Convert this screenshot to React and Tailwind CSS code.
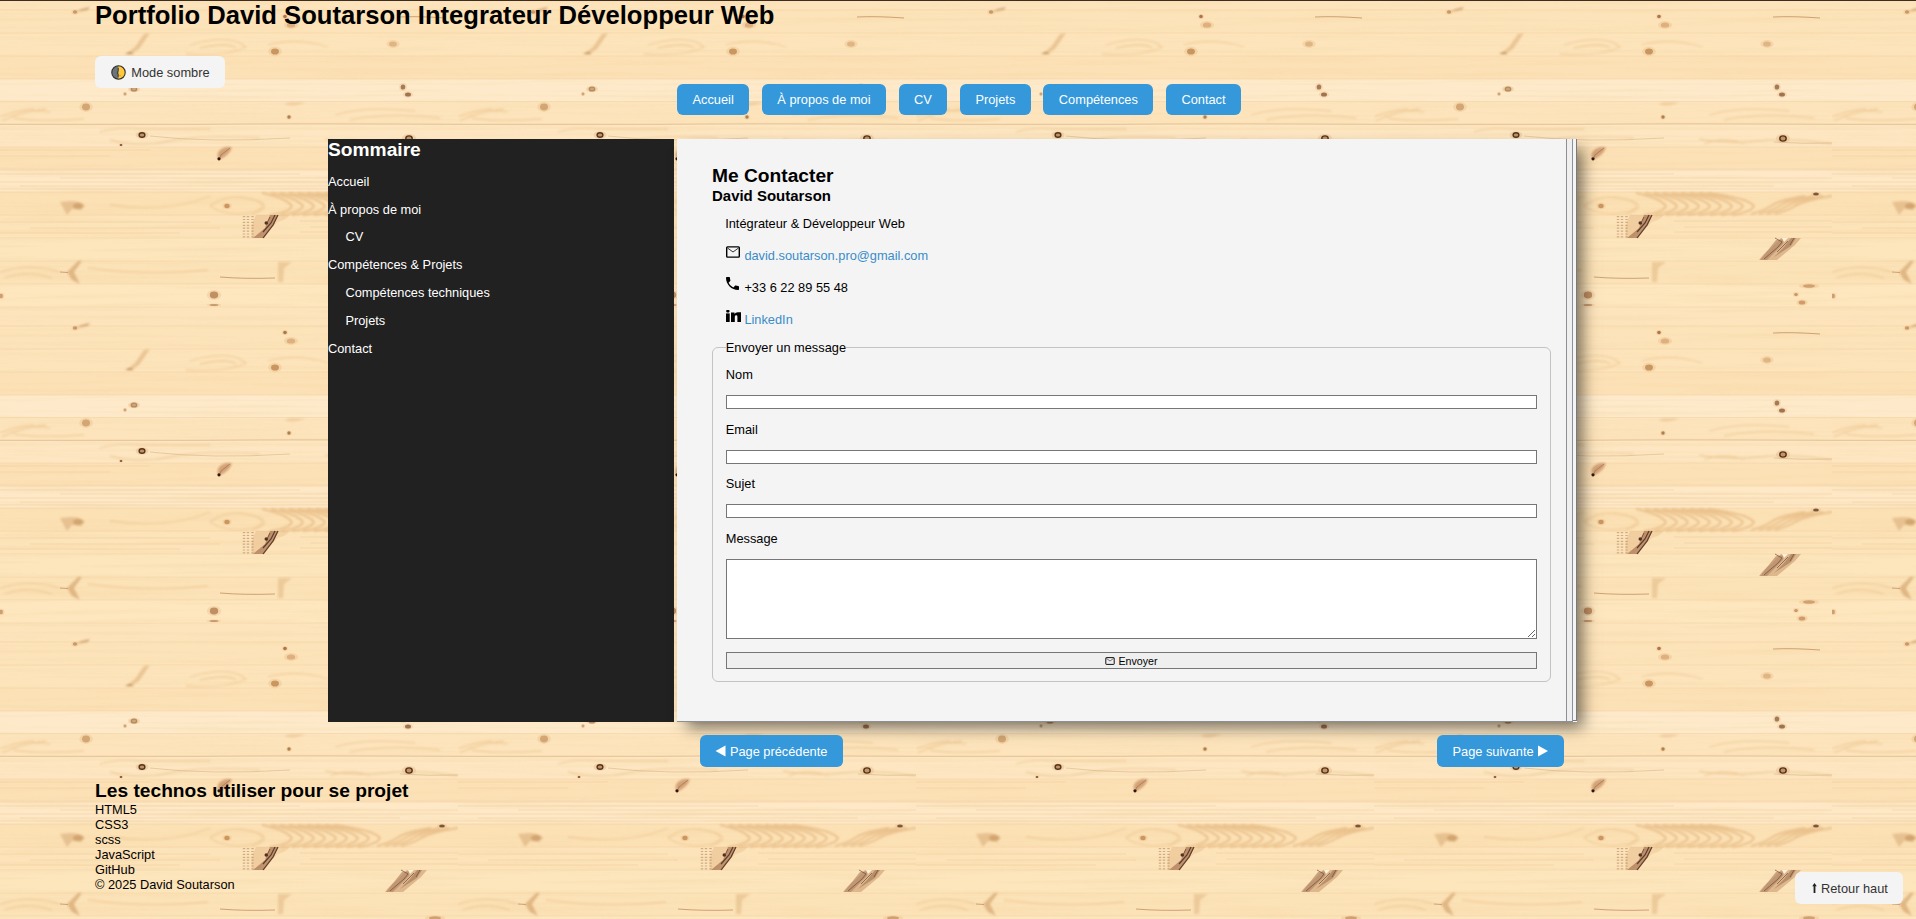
import React from "react";

const seams = [10, 33, 56, 79, 101.5, 124, 147, 169, 192, 215, 238, 261, 284, 307];
const tints = ["#fde3b9", "#fde4bb", "#fde1b6", "#feeaca", "#fde4bc", "#fde6c1", "#fde1b6", "#fee8c6", "#fce1b5", "#fde3b9", "#fde5bc", "#fce2b7", "#fee6be", "#fde4bc"];

const knots = [
  [75, 12, 2.1, 1.7, "#ab7045", 0.6],
  [285, 16.5, 1.8, 1.7, "#95552f", 0.75],
  [291, 25, 4.2, 2.6, "#c98c58", 0.5],
  [275, 51.5, 4, 3.1, "#b97d40", 0.7],
  [393, 44, 3.9, 2.6, "#c9955f", 0.5],
  [403, 87, 2.3, 2.6, "#85522f", 0.7],
  [408, 94.5, 3, 2.1, "#85522f", 0.75],
  [125, 94, 1.4, 1.4, "#b8804c", 0.6],
  [86, 107, 4, 3.4, "#bd8750", 0.6],
  [289, 117, 1.7, 1.7, "#9a6134", 0.75],
  [121, 145, 1.3, 1.1, "#603318", 0.8],
  [442, 194, 2.9, 1.5, "#56301c", 0.75],
  [227, 206, 2.7, 2.2, "#bd7d44", 0.7],
  [214, 295, 4.2, 3.4, "#a5683a", 0.65],
  [214, 305, 4.4, 1, "#a5683a", 0.55],
  [1, 296, 2, 2.2, "#a5683a", 0.5],
  [435, 286, 6, 1.7, "#bd8550", 0.65],
  [422, 294.5, 1.8, 1.6, "#a86c3c", 0.6],
  [428, 302.5, 3.3, 2.1, "#bd7d48", 0.65],
];

const rings = [
  [134, 89, 2.7, 1.9, "#9a6c3e", 0.7],
  [142, 135, 2.9, 2.2, "#4c2c18", 0.95],
  [409, 138.5, 3.2, 2.6, "#4c2c18", 0.95],
];

const chevrons = [0, 1, 2, 3, 4, 5, 6, 7, 8, 9, 10, 11, 12];

function Wood() {
  return (
    <svg className="absolute inset-0 h-full w-full" aria-hidden="true">
      <defs>
        <filter id="grain" x="0" y="0" width="100%" height="100%">
          <feTurbulence type="fractalNoise" baseFrequency="0.006 0.22" numOctaves="3" seed="8" stitchTiles="stitch" />
          <feColorMatrix values="0 0 0 0 0.9  0 0 0 0 0.68  0 0 0 0 0.38  2.2 0 0 0 -0.95" />
        </filter>
        <filter id="soft" x="-20%" y="-20%" width="140%" height="140%">
          <feGaussianBlur stdDeviation="0.7" />
        </filter>
        <filter id="softer" x="-20%" y="-20%" width="140%" height="140%">
          <feGaussianBlur stdDeviation="1.1" />
        </filter>
        <pattern id="wood" width="458" height="316" patternUnits="userSpaceOnUse">
          <rect width="458" height="316" fill="#fde4bc" />
          {seams.map((y, i) => (
            <g key={y}>
              <rect x="0" y={y} width="458" height="23" fill={tints[i]} />
              <rect x="0" y={y - 0.3} width="458" height="0.6" fill="#dcae72" opacity="0.35" />
            </g>
          ))}
          <rect width="458" height="316" filter="url(#grain)" opacity="0.42" />
          <g fill="none" stroke="#e6b97e" strokeWidth="1.3" opacity="0.5" filter="url(#softer)">
            <path d="M0 117q14-6 34-8M2 121q14-8 44-12M12 117q16-8 38-5M14 118q22 4 70 1" />
            <path d="M190 45q40-12 56 2q-20 10-60 7M200 48q28-6 36 0M268 45q28-8 60 2" />
            <path d="M335 115q30-9 80-4M350 120q40-8 90-2" />
            <path d="M100 132q15-5 40-3h70M110 140q30 8 60 1t90-3" />
            <path d="M325 139q30 6 60 2t73 3M330 144q20-8 40 0" />
            <path d="M0 272q30-9 60 0M4 278q25-8 48 0M88 268q60 8 120 2" />
            <path d="M210 206q18-14 44-6q16 6 0 12q-28 5-44-6M240 197q42 7 12 17" />
            <path d="M110 205q60 8 100-9" />
          </g>
          <g fill="none" stroke="#dba668" strokeWidth="2" opacity="0.55" filter="url(#softer)">
            {chevrons.map((i) => (
              <path
                key={i}
                d={i < 9 ? `M${262 + i * 9} 193q${24 + i * 2} 5 ${30 + i * 2} 13q-2 6-22 9` : `M${458 - (i - 9) * 9} 196q-26 4-${46 - i} 10q-8 5-20 8`}
              />
            ))}
          </g>
          <path d="M0 170h458M0 174h300M60 178h398M0 182h458M20 186h380M0 189h458M0 222h210M30 228h190M300 221h158M310 227h148M0 233h180M300 232h158M0 150h150M0 156h110" stroke="#dfb67d" strokeWidth="0.7" opacity="0.45" />
          <path d="M0 124.4h200q90-1 258 0" stroke="#b98750" strokeWidth="0.7" fill="none" opacity="0.45" />
          <path d="M150 136q60 7 140 2M400 142q30 2 58 1" stroke="#b98750" strokeWidth="0.7" fill="none" opacity="0.45" />
          <path d="M220 277q24 2 55 1M399 17q20-1 47 1M60 272l8 0.5" stroke="#a4683a" strokeWidth="0.9" fill="none" opacity="0.6" />
          <g filter="url(#softer)">
            <path d="M76 12q5-4 14-5l-2 3z" fill="#c08b58" opacity="0.6" />
            <path d="M144 34l6-1l-11 16l-6 4h-6l8-6z" fill="#d9a871" opacity="0.5" />
            <path d="M125 54q5-3 9 0z" fill="#98602f" opacity="0.8" />
            <path d="M78 261l4 0l-8 11l6 12l-8-4l-5-8z" fill="#cf9c66" opacity="0.6" />
            <path d="M278 262h14l-8 6l-1 14h-5z" fill="#ddb380" opacity="0.5" />
            <path d="M290 102h16l-8 3q-8 2-14-1z" fill="#e3b27c" opacity="0.4" />
            <path d="M60 202l10-1q12 0 15 5l-4 4l-9-1l-5 6z" fill="#d5a46d" opacity="0.5" />
            <ellipse cx="78" cy="206" rx="5" ry="3" fill="#bd8750" opacity="0.5" />
            <path d="M219 160q-5-9 7-13h6q-2 8-13 13z" fill="#c99468" opacity="0.8" />
          </g>
          <g filter="url(#soft)">
            <path d="M219 160l2-5l9-7" stroke="#7b4b30" strokeWidth="0.8" fill="none" opacity="0.5" />
            <circle cx="219" cy="158.8" r="1.6" fill="#321509" />
            {knots.map(([x, y, rx, ry, c, o]) => (
              <g key={`${x}-${y}`}>
                <ellipse cx={x} cy={y} rx={rx * 1.7} ry={ry * 1.5} fill="#e0ad73" opacity="0.25" />
                <ellipse cx={x} cy={y} rx={rx} ry={ry} fill={c} opacity={o} />
              </g>
            ))}
            {rings.map(([x, y, rx, ry, c, o]) => (
              <g key={x}>
                <ellipse cx={x} cy={y} rx={rx * 2.2} ry={ry * 1.7} fill="#d9a56e" opacity="0.3" />
                <ellipse cx={x} cy={y} rx={rx} ry={ry} fill="#c0905f" stroke={c} strokeWidth="1.4" opacity={o} />
              </g>
            ))}
          </g>
          <g opacity="0.9">
            <path d="M256 215h20l-8 14l-10 9h-6q-2-12 4-23z" fill="#eac191" opacity="0.7" />
            <path d="M274 215h16q-4 5-12 7l-8 7z" fill="#e0b07b" opacity="0.35" />
            <path d="M270 215h8l-4 10l-10 13h-11l12-10z" fill="#a87552" opacity="0.8" />
            <path d="M275 215l-4 8l-8 9M278 215l-5 10l-10 13" stroke="#4a281a" strokeWidth="1.2" fill="none" />
            <circle cx="266.3" cy="223" r="1.8" fill="#3c1c10" />
            <path d="M267 223l3-6" stroke="#5b3020" strokeWidth="0.8" />
            <path d="M244 216v22M248 216v22M252.5 216v22" stroke="#b58a65" strokeWidth="2.4" strokeDasharray="1.2 1.7" opacity="0.7" />
            <g filter="url(#soft)">
              <path d="M407 238h20l-6 7l-18 15h-18q4-6 12-12z" fill="#d3a67c" opacity="0.8" />
              <path d="M402 240l8-1l-1 5l-16 16h-7z" fill="#ad7f5e" opacity="0.7" />
              <path d="M417 238l5 0l-5 8l-17 11l10-10z" fill="#95674a" opacity="0.6" />
            </g>
            <path d="M401 238l7 4l-4 5l-14 12M414 241l-11 11M420 238l-4 7" stroke="#5a3424" strokeWidth="0.9" fill="none" opacity="0.75" />
            <path d="M408 238h6l-4 4z" fill="#fff3df" />
          </g>
        </pattern>
      </defs>
      <rect width="100%" height="100%" fill="url(#wood)" />
    </svg>
  );
}

function Mail({ className }) {
  return (
    <svg viewBox="0 0 14 12" className={className} fill="none" stroke="currentColor" aria-hidden="true">
      <rect x="0.7" y="0.9" width="12.6" height="10.2" rx="0.8" strokeWidth="1.4" />
      <path d="M1.5 2l5.5 4l5.5-4" strokeWidth="0.8" />
    </svg>
  );
}

const Phone = () => (
  <svg viewBox="3 3 18 18" className="h-[13px] w-[13px]" fill="currentColor" aria-hidden="true">
    <path d="M6.62 10.79c1.44 2.83 3.76 5.14 6.59 6.59l2.2-2.2c.27-.27.67-.36 1.02-.24 1.12.37 2.33.57 3.57.57.55 0 1 .45 1 1V20c0 .55-.45 1-1 1-9.39 0-17-7.61-17-17 0-.55.45-1 1-1h3.5c.55 0 1 .45 1 1 0 1.25.2 2.45.57 3.57.11.35.03.74-.25 1.02l-2.2 2.2z" />
  </svg>
);

const LinkedIn = () => (
  <svg viewBox="0 0 15 12" className="h-[12px] w-[15px]" fill="currentColor" aria-hidden="true">
    <rect x="0" y="3.4" width="3.7" height="8.6" />
    <rect x="0.2" y="0" width="3.3" height="2.4" rx="0.8" />
    <path d="M5 2.4h3.5v1.5Q9.4 2.2 11.8 2.2H15V12h-3.6V6.6q0-1.4-1.2-1.4T8.8 6.6V12H5z" />
  </svg>
);

const Moon = () => (
  <svg viewBox="0 0 15 15" className="h-[15px] w-[15px]" aria-hidden="true">
    <circle cx="7.5" cy="7.5" r="6.7" fill="#ffc83d" />
    <path d="M7.5 .8a6.7 6.7 0 0 0 0 13.4z" fill="#6c757c" />
    <circle cx="7.5" cy="7.5" r="6.7" fill="none" stroke="#34332c" strokeWidth="1.1" />
    <path d="M7.3 3l-.2 3l-1 2l1 1v3" fill="none" stroke="#34332c" strokeWidth=".9" />
    <circle cx="9" cy="10.6" r=".8" fill="#e79a20" />
  </svg>
);

const blue = "flex items-center rounded-[6px] bg-[#3498db] px-[15.4px] text-white";

const sommaire = [
  ["Accueil", false],
  ["À propos de moi", false],
  ["CV", true],
  ["Compétences & Projets", false],
  ["Compétences techniques", true],
  ["Projets", true],
  ["Contact", false],
];

export default function App() {
  return (
    <div className="relative flex h-[919px] w-full flex-col overflow-hidden bg-[#fde4bc] font-['Liberation_Sans',Arial,sans-serif] text-[12.8px] leading-[15px] text-black">
      <Wood />
      <div className="relative h-px shrink-0 bg-[#3d2c22]" />
      <header className="relative flex h-[138px] shrink-0 flex-col">
        <h1 className="ml-[95px] h-[55px] text-[25.6px] leading-[28px] font-bold">Portfolio David Soutarson Integrateur Développeur Web</h1>
        <button className="ml-[95px] flex h-[32px] w-[130px] shrink-0 items-center gap-[4px] rounded-[6px] bg-[#f4f4f4] pl-[16.3px] text-[#333]">
          <Moon />
          <span className="pl-[1px]">Mode sombre</span>
        </button>
        <nav className="-mt-[4px] flex justify-center gap-[12.8px] pl-[2px]">
          {["Accueil", "À propos de moi", "CV", "Projets", "Compétences", "Contact"].map((t) => (
            <a key={t} className={`${blue} h-[31px]`}>{t}</a>
          ))}
        </nav>
      </header>

      <div className="relative ml-[328px] flex h-[583px] w-[1249px] shrink-0 gap-[3px]">
        <aside className="w-[346px] shrink-0 bg-[#212121] text-white">
          <h2 className="h-[34.8px] text-[19.2px] leading-[22px] font-bold">Sommaire</h2>
          <ul className="flex flex-col gap-[12.8px]">
            {sommaire.map(([t, sub]) => (
              <li key={t} className={sub ? "pl-[17.4px]" : ""}>{t}</li>
            ))}
          </ul>
        </aside>

        <div className="flex flex-1 bg-[#f4f4f4] shadow-[8px_8px_14px_-2px_rgba(0,0,0,0.5)]">
          <main className="flex w-[890px] flex-col border-r border-b border-[#8d8f92] pt-[26px] pr-[15px] pl-[35px]">
            <h2 className="text-[19.2px] leading-[22px] font-bold">Me Contacter</h2>
            <h3 className="text-[14.97px] leading-[17px] font-bold">David Soutarson</h3>
            <div className="flex flex-col pt-[11.8px] pl-[13.2px]">
              <p>Intégrateur &amp; Développeur Web</p>
              <p className="flex h-[32px] items-start gap-[4.6px] pt-[15px]">
                <span className="flex w-[14.6px] justify-end"><Mail className="h-[12px] w-[14px]" /></span>
                <a className="pt-[2px] text-[#3a8cc9]">david.soutarson.pro@gmail.com</a>
              </p>
              <p className="flex h-[32px] items-start gap-[5.2px] pt-[14px]">
                <span className="flex w-[14px] justify-end"><Phone /></span>
                <span className="pt-[3px]">+33 6 22 89 55 48</span>
              </p>
              <p className="flex h-[32px] items-start gap-[3.6px] pt-[15px]">
                <span className="flex w-[15.6px] justify-end"><LinkedIn /></span>
                <a className="pt-[2px] text-[#3a8cc9]">LinkedIn</a>
              </p>
            </div>
            <fieldset className="mt-[13.4px] flex h-[342px] flex-col rounded-[6px] border border-[#c3c3c3] px-[12.8px]">
              <legend className="h-[15px]">Envoyer un message</legend>
              {["Nom", "Email", "Sujet"].map((t, i) => (
                <label key={t} className={`flex h-[54.6px] shrink-0 flex-col ${i === 0 ? "mt-[12px]" : ""}`}>
                  {t}
                  <input className="mt-[13px] h-[14px] w-full border border-[#767676] bg-white" />
                </label>
              ))}
              <label className="flex flex-col">
                Message
                <textarea className="mt-[13px] h-[80px] w-full resize-y border border-[#767676] bg-white" />
              </label>
              <button className="mt-[13px] flex h-[17px] shrink-0 items-center justify-center gap-[3px] border border-[#767676] bg-[#efefef] pt-px text-[10.67px] leading-[12px]">
                <Mail className="h-[8px] w-[10px]" />
                Envoyer
              </button>
            </fieldset>
          </main>
          <div className="w-[6px] border-r border-b border-[#8b929e] bg-[#efefef]" />
          <div className="mb-px w-[4px] border-r border-b border-[#777b80] bg-[#f4f4f4]" />
        </div>
      </div>

      <div className="relative mt-[13px] ml-[700px] flex h-[32px] w-[864px] shrink-0 justify-between">
        <a className={`${blue} gap-[4px]`}>
          <svg viewBox="0 0 10.5 12" className="h-[12px] w-[10.5px]" fill="currentColor"><path d="M10.5 .5v11L0.5 6z" /></svg>
          Page précédente
        </a>
        <a className={`${blue} gap-[4.5px]`}>
          Page suivante
          <svg viewBox="0 0 10.5 12" className="h-[12px] w-[10.5px]" fill="currentColor"><path d="M0 .5v11L10 6z" /></svg>
        </a>
      </div>

      <footer className="relative mt-[12.5px] ml-[95px]">
        <h2 className="text-[19.2px] leading-[22px] font-bold">Les technos utiliser pour se projet</h2>
        {["HTML5", "CSS3", "scss", "JavaScript", "GitHub"].map((t) => (
          <p key={t}>{t}</p>
        ))}
        <p>© 2025 David Soutarson</p>
      </footer>

      <button className="absolute right-[13px] bottom-[15px] flex h-[32px] w-[108px] items-center rounded-[6px] bg-[#f4f4f4] pl-[15.5px] text-[#333]">
        <svg viewBox="0 0 7 10" className="mr-[3.5px] h-[10px] w-[7px]" fill="#222"><path d="M3.5 0L5.8 3.2H4.4V10H2.6V3.2H1.2z" /></svg>
        Retour haut
      </button>
    </div>
  );
}
